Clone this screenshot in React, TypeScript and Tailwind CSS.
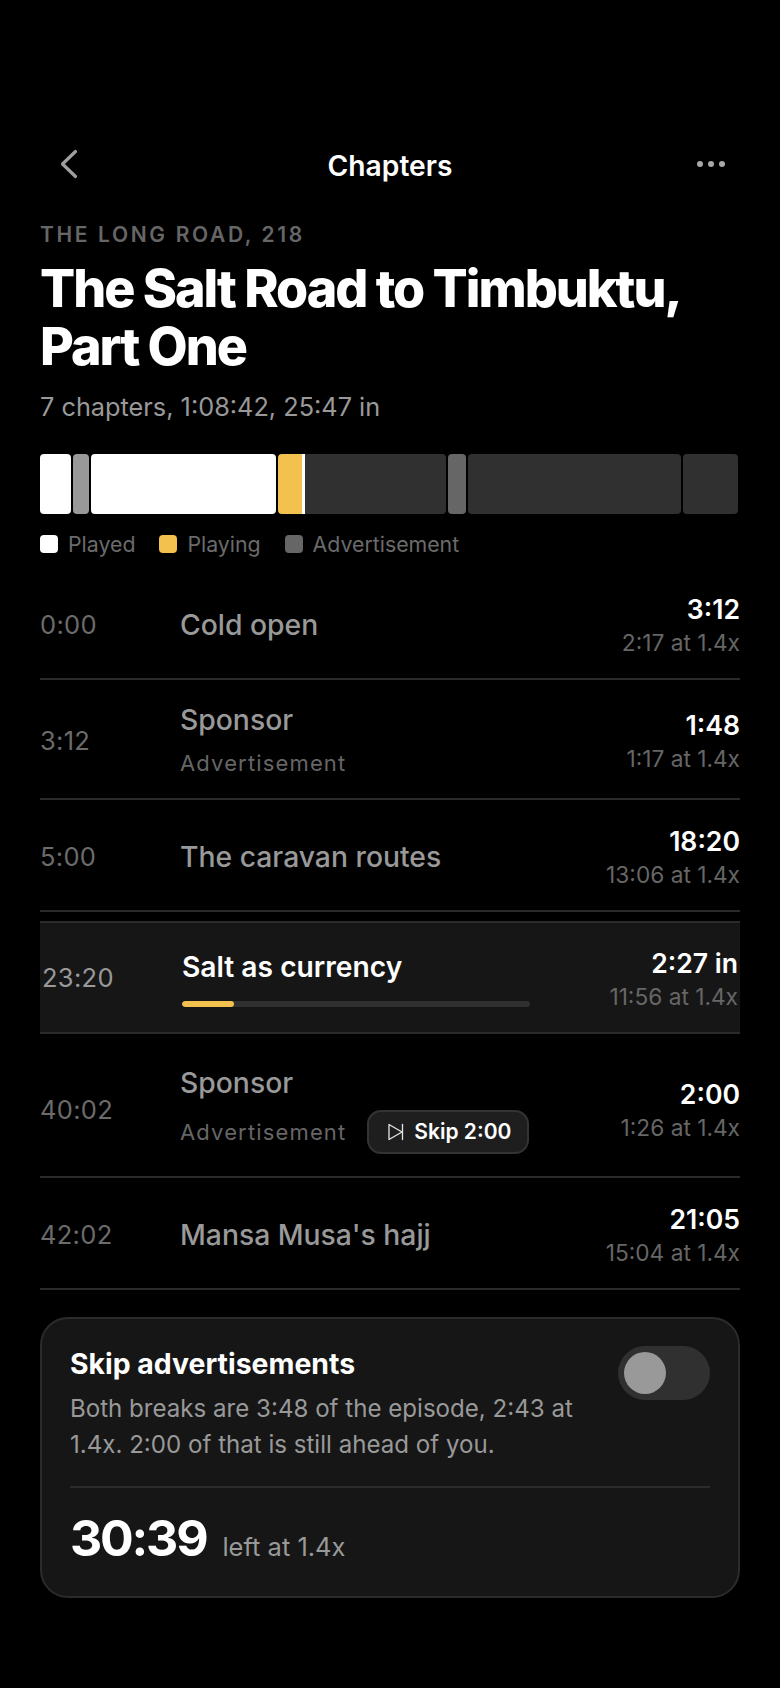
const TOTAL = 4122;

const segments = [
  { len: 192, kind: 'played' },
  { len: 108, kind: 'adPlayed' },
  { len: 1100, kind: 'played' },
  { len: 1002, kind: 'current' },
  { len: 120, kind: 'ad' },
  { len: 1265, kind: 'rest' },
  { len: 335, kind: 'rest' },
];

const segmentColor: Record<string, string> = {
  played: 'bg-white',
  adPlayed: 'bg-[#999999]',
  current: 'bg-[#303030]',
  ad: 'bg-[#666666]',
  rest: 'bg-[#303030]',
};

function ChevronBack() {
  return (
    <svg width="18" height="30" viewBox="0 0 18 30" fill="none" stroke="#a0a0a0" strokeWidth="3.2" strokeLinecap="round" strokeLinejoin="round">
      <path d="M15.5 2.5 L2.5 15 L15.5 27.5" />
    </svg>
  );
}

function SkipIcon() {
  return (
    <svg width="16" height="18" viewBox="0 0 16 18" fill="none" stroke="#e5e5e5" strokeWidth="1.3" strokeLinejoin="round" strokeLinecap="round">
      <path d="M1 1.5 L14 9 L1 16.5 Z" />
      <path d="M14.5 1.5 V16.5" />
    </svg>
  );
}

function LegendItem({ color, label }: { color: string; label: string }) {
  return (
    <div className="flex items-center gap-[10px]">
      <span className={`h-[18px] w-[18px] rounded-[4px] ${color}`} />
      <span className="text-[21.3px] leading-[28px] text-[#6b6b6b]">{label}</span>
    </div>
  );
}

function Row({
  start,
  title,
  length,
  atSpeed,
  ad,
  skip,
  className,
}: {
  start: string;
  title: string;
  length: string;
  atSpeed: string;
  ad?: boolean;
  skip?: boolean;
  className: string;
}) {
  return (
    <div className={`grid grid-cols-[140px_1fr_auto] items-center border-b-2 border-[#2b2b2b] ${className}`}>
      <span className="pt-[1px] text-[25.5px] tracking-[0.3px] text-[#6b6b6b]">{start}</span>
      <div>
        <div className="text-[28.3px] leading-[36px] font-[550] text-[#999999]">{title}</div>
        {ad && (
          <div className="mt-[9px] flex items-center gap-[21px]">
            <span className="text-[22px] tracking-[1.15px] text-[#666666]">Advertisement</span>
            {skip && (
              <span className="flex h-[44px] items-center gap-[10px] rounded-[14px] border-2 border-[#333333] bg-[#1e1e1e] pl-[19px] pr-[16px] text-[21px] font-semibold text-white">
                <SkipIcon />
                Skip 2:00
              </span>
            )}
          </div>
        )}
      </div>
      <div className="text-right">
        <div className="text-[26.6px] leading-[34px] font-semibold text-white">{length}</div>
        <div className="mt-[2px] text-[22.7px] leading-[30px] text-[#666666]">{atSpeed}</div>
      </div>
    </div>
  );
}

export default function App() {
  return (
    <div
      className="min-h-[1688px] w-[780px] bg-black px-[40px] pt-[144px] text-white"
      style={{ fontFamily: 'Inter, "Noto Sans", sans-serif' }}
    >
      <header className="relative flex h-[44px] items-center justify-between pl-[20px] pr-[15px]">
        <div className="pb-[4px]">
          <ChevronBack />
        </div>
        <h2 className="absolute left-0 right-0 text-center text-[28.2px] font-semibold">Chapters</h2>
        <div className="flex gap-[5px] pb-[4px]">
          <span className="h-[6px] w-[6px] rounded-full bg-[#a8a8a8]" />
          <span className="h-[6px] w-[6px] rounded-full bg-[#a8a8a8]" />
          <span className="h-[6px] w-[6px] rounded-full bg-[#a8a8a8]" />
        </div>
      </header>

      <div className="mt-[33px] text-[21px] leading-[28px] font-semibold tracking-[2.64px] text-[#666666]">THE LONG ROAD, 218</div>
      <h1 className="mt-[11px] text-[52px] leading-[58px] font-extrabold tracking-[-2.03px]">
        The Salt Road to Timbuktu,
        <br />
        Part One
      </h1>
      <p className="mt-[14px] text-[25.3px] leading-[34px] text-[#999999]">7 chapters, 1:08:42, 25:47 in</p>

      <div className="mt-[30px] flex h-[60px]">
        {segments.map((s, i) => (
          <div key={i} className="pr-[2px]" style={{ width: `${(s.len / TOTAL) * 100}%` }}>
            <div className={`flex h-full overflow-hidden rounded-[4px] ${segmentColor[s.kind]}`}>
              {s.kind === 'current' && (
                <>
                  <div className="w-[24px] bg-[#f2c14e]" />
                  <div className="w-[3px] bg-white" />
                </>
              )}
            </div>
          </div>
        ))}
      </div>

      <div className="mt-[16px] flex gap-[24px]">
        <LegendItem color="bg-white" label="Played" />
        <LegendItem color="bg-[#f2c14e]" label="Playing" />
        <LegendItem color="bg-[#666666]" label="Advertisement" />
      </div>

      <div className="mt-[10px]">
        <Row className="h-[112px] pt-[3px]" start="0:00" title="Cold open" length="3:12" atSpeed="2:17 at 1.4x" />
        <Row className="h-[120px] pt-[3px]" start="3:12" title="Sponsor" length="1:48" atSpeed="1:17 at 1.4x" ad />
        <Row className="h-[112px] pt-[3px]" start="5:00" title="The caravan routes" length="18:20" atSpeed="13:06 at 1.4x" />

        <div className="mt-[9px] grid h-[113px] grid-cols-[140px_1fr_auto] items-center border-y-2 border-[#2b2b2b] bg-[#161616] px-[2px] pt-[2px]">
          <span className="text-[25.5px] tracking-[0.3px] text-[#999999]">23:20</span>
          <div className="-mt-[2px]">
            <div className="text-[28.2px] leading-[36px] font-semibold text-white">Salt as currency</div>
            <div className="mt-[16px] h-[6px] w-[348px] overflow-hidden rounded-full bg-[#303030]">
              <div className="h-full w-[52px] rounded-full bg-[#f2c14e]" />
            </div>
          </div>
          <div className="text-right">
            <div className="text-[26.6px] leading-[34px] font-semibold text-white">2:27 in</div>
            <div className="mt-[2px] text-[22.7px] leading-[30px] text-[#666666]">11:56 at 1.4x</div>
          </div>
        </div>

        <Row className="h-[144px] pt-[9px]" start="40:02" title="Sponsor" length="2:00" atSpeed="1:26 at 1.4x" ad skip />
        <Row className="h-[112px] pt-[3px]" start="42:02" title="Mansa Musa's hajj" length="21:05" atSpeed="15:04 at 1.4x" />
      </div>

      <section className="mt-[27px] h-[281px] rounded-[28px] border-2 border-[#2b2b2b] bg-[#161616] px-[28px] pt-[27px]">
        <div className="flex justify-between">
          <div>
            <div className="text-[28.4px] leading-[36px] font-bold">Skip advertisements</div>
            <p className="mt-[9px] w-[520px] text-[24.1px] leading-[36px] text-[#999999]">
              Both breaks are 3:48 of the episode, 2:43 at 1.4x. 2:00 of that is still ahead of you.
            </p>
          </div>
          <div className="flex h-[54px] w-[92px] items-center rounded-full bg-[#303030] px-[6px]">
            <span className="h-[42px] w-[42px] rounded-full bg-[#999999]" />
          </div>
        </div>
        <div className="mt-[23px] flex items-baseline gap-[16px] border-t-2 border-[#2b2b2b] pt-[18px]">
          <span className="text-[50px] leading-[64px] font-bold tracking-[-2.2px]">30:39</span>
          <span className="text-[25.5px] text-[#999999]">left at 1.4x</span>
        </div>
      </section>
    </div>
  );
}
